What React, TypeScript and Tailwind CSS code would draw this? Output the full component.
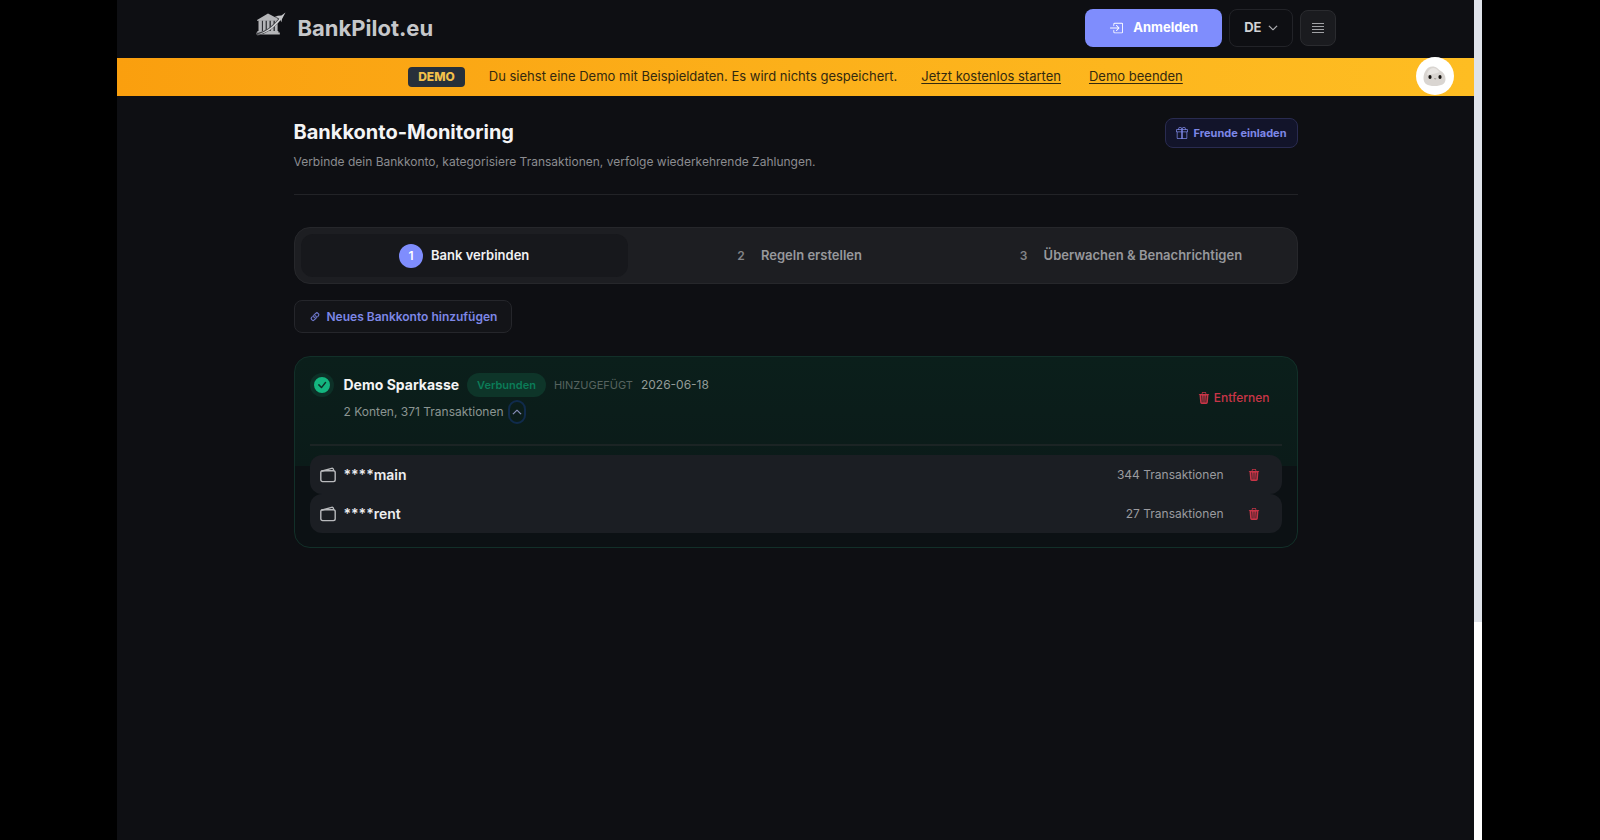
import { useState } from 'react'
import {
  BsBoxArrowInRight,
  BsCheckCircleFill,
  BsChevronDown,
  BsChevronUp,
  BsGift,
  BsLink45Deg,
  BsTrash3Fill,
} from 'react-icons/bs'
import clsx from 'clsx'

interface Account {
  id: string
  name: string
  transactions: number
}

const STEPS = ['Bank verbinden', 'Regeln erstellen', 'Überwachen & Benachrichtigen']

const ACCOUNTS: Account[] = [
  { id: 'main', name: '****main', transactions: 344 },
  { id: 'rent', name: '****rent', transactions: 27 },
]

function Logo() {
  return (
    <svg viewBox="0 0 30 24" className="mb-2 h-6 w-[30px]" aria-hidden="true">
      <g fill="#b4b5b8">
        <path d="M1 8 12 1.500 22 6.700v2H1z" />
        <path d="M2.500 8.200h3.400v11H2.500zM6.800 8.200h2.900v11H6.800zM10.700 8.200h2.900v11h-2.900zM14.700 8.200h2.900v11h-2.900zM18.700 8.200h2.900v11h-2.900z" />
        <path d="M1.400 19h21v1.400h-21zM.5 20.600h23.300v1.800H.5z" />
      </g>
      <path d="M1 22.5C11 20.5 19 14 26 4.5" fill="none" stroke="#45464a" strokeWidth="2.800" />
      <path d="M.8 22.8C11 20 18.500 13.500 25 4.800l1.200.9C19.500 14.500 12 21 .8 22.800z" fill="#d6d7d9" />
      <path d="M29.500.6 26 7l-.6 3.200-1.200-2.800-2.600-1.600-3-.8 3.200-1.200 3.600-.2z" fill="#c4c5c8" />
    </svg>
  )
}

function Mascot() {
  return (
    <svg viewBox="0 0 38 38" className="size-full" aria-hidden="true">
      <circle cx="19" cy="19" r="19" fill="#fff" />
      <path d="M7.500 21c0-5 3-11.500 9-11.500 4 0 5.500 2.500 7.500 4 3.500 2 5.500 4.500 5.500 8.500 0 5-4 7-11 7s-11-2-11-8z" fill="#d9d5d1" />
      <path d="M11 18c.5-4 3-7 6.500-7 3 0 4.500 2.500 6 4-4 2-9 2-12.500 3z" fill="#e8e5e2" />
      <ellipse cx="14" cy="20" rx="1.600" ry="1.900" fill="#15120f" />
      <ellipse cx="24" cy="20" rx="1.600" ry="1.900" fill="#15120f" />
      <path d="M18.200 21.500q1 .8 2 0" fill="none" stroke="#7a726c" strokeWidth=".7" />
    </svg>
  )
}

function MenuIcon() {
  return (
    <svg viewBox="0 0 12 12" className="size-3" stroke="currentColor" strokeWidth="1.200" aria-hidden="true">
      <path d="M0 1.500h12M0 4.500h12M0 7.500h12M0 10.500h12" />
    </svg>
  )
}

function WalletIcon() {
  return (
    <svg
      viewBox="0 0 16 16"
      className="size-4 text-[#b9babd]"
      fill="none"
      stroke="currentColor"
      strokeWidth="1.400"
      strokeLinejoin="round"
      aria-hidden="true"
    >
      <rect x=".8" y="3.800" width="14.400" height="10.800" rx="1.800" />
      <path d="M1.400 4.200 11.600 1.400q1.700-.4 1.900 1.200v1.200" />
    </svg>
  )
}

function Header() {
  return (
    <header className="px-6 pb-0.5">
      <div className="mx-auto flex h-14 max-w-[1080px] items-center justify-between">
        <a href="#" className="flex items-center gap-3">
          <Logo />
          <span className="text-[22px] leading-6 font-bold text-[#c6c7ca]">BankPilot.eu</span>
        </a>
        <div className="flex items-center gap-[7px]">
          <button
            type="button"
            className="flex h-[38px] items-center gap-2.5 rounded-lg bg-[#7f8dfd] px-6 text-[13px] font-bold text-white"
          >
            <BsBoxArrowInRight className="size-3.5" />
            Anmelden
          </button>
          <button
            type="button"
            className="flex h-[38px] items-center gap-1.5 rounded-lg border border-[#222328] px-3.5 text-[13px] font-bold text-[#d2d3d6]"
          >
            DE
            <BsChevronDown className="size-2.5" strokeWidth={0.8} />
          </button>
          <button
            type="button"
            aria-label="Menü"
            className="flex size-9 items-center justify-center rounded-lg border border-[#2a2b2f] bg-[#1a1b1f] text-[#a0a1a5]"
          >
            <MenuIcon />
          </button>
        </div>
      </div>
    </header>
  )
}

function DemoBanner() {
  return (
    <div className="relative flex h-[38px] items-center justify-center bg-linear-to-r from-[#fa9f0e] via-[#fcb01a] to-[#febd22] text-[13px] text-[#33290f]">
      <span className="mr-6 rounded bg-[#27303a] px-2.5 text-xs leading-5 font-extrabold text-[#f3c04a]">DEMO</span>
      <p>Du siehst eine Demo mit Beispieldaten. Es wird nichts gespeichert.</p>
      <a href="#" className="ml-6 underline underline-offset-2">
        Jetzt kostenlos starten
      </a>
      <a href="#" className="ml-7 underline underline-offset-2">
        Demo beenden
      </a>
      <button type="button" aria-label="Assistent" className="absolute -top-px right-5 size-[38px]">
        <Mascot />
      </button>
    </div>
  )
}

function Steps({ active, onSelect }: { active: number; onSelect: (index: number) => void }) {
  return (
    <div className="mt-8 grid grid-cols-3 gap-1 rounded-2xl border border-[#26272b] bg-[#1d1e22] p-1.5">
      {STEPS.map((label, i) => (
        <button
          key={label}
          type="button"
          onClick={() => onSelect(i)}
          className={clsx(
            'flex h-[43px] items-center justify-center gap-2 rounded-xl text-[13px] font-semibold',
            i === active ? 'bg-[#17181c] text-[#f1f1f3]' : 'text-[#97989c]',
          )}
        >
          <span
            className={clsx(
              'flex size-6 items-center justify-center rounded-full text-xs',
              i === active ? 'bg-[#7f8dfd] text-white' : 'text-[#838488]',
            )}
          >
            {i + 1}
          </span>
          {label}
        </button>
      ))}
    </div>
  )
}

function AccountRow({ account }: { account: Account }) {
  return (
    <li className="flex h-[39px] items-center rounded-xl bg-[#1b1e23] pr-[22px] pl-2.5">
      <WalletIcon />
      <span className="ml-2 text-sm font-semibold text-[#eeeef0]">{account.name}</span>
      <span className="ml-auto text-xs text-[#9a9b9f]">{account.transactions} Transaktionen</span>
      <button type="button" aria-label={`${account.name} entfernen`} className="ml-6 text-[#c93547]">
        <BsTrash3Fill className="size-3" />
      </button>
    </li>
  )
}

function BankCard() {
  const [open, setOpen] = useState(true)

  return (
    <section className="mt-[23px] rounded-2xl border border-[#123029] bg-[linear-gradient(to_bottom,#0b1f1b_0,#0b1b19_109px,#0c1114_109px)] px-[15px] py-3.5">
      <div className="flex items-center justify-between pr-3">
        <div className="flex gap-2.5">
          <span className="mt-0.5 flex size-6 items-center justify-center rounded-full bg-[#0d3027]">
            <BsCheckCircleFill className="size-4 text-[#14b57f]" />
          </span>
          <div>
            <div className="flex h-7 items-center gap-2">
              <h2 className="text-sm font-bold text-[#f4f4f5]">Demo Sparkasse</h2>
              <span className="flex h-6 items-center rounded-full bg-[#0e3529] px-2.5 text-[11px] font-semibold text-[#0b7c58]">
                Verbunden
              </span>
              <span className="text-[11px] text-[#56635f] uppercase">Hinzugefügt</span>
              <span className="text-xs text-[#929b98]">2026-06-18</span>
            </div>
            <div className="flex h-[26px] items-center gap-1 text-xs text-[#8b9592]">
              2 Konten, 371 Transaktionen
              <button
                type="button"
                aria-label="Konten anzeigen"
                aria-expanded={open}
                onClick={() => setOpen(!open)}
                className="flex h-6 w-[18px] items-center justify-center rounded-full border-2 border-[#102b4c] text-[#a3a6d8]"
              >
                {open ? (
                  <BsChevronUp className="size-2.5" strokeWidth={0.8} />
                ) : (
                  <BsChevronDown className="size-2.5" strokeWidth={0.8} />
                )}
              </button>
            </div>
          </div>
        </div>
        <button type="button" className="flex items-center gap-1 text-xs font-medium text-[#c93547]">
          <BsTrash3Fill className="size-3" />
          Entfernen
        </button>
      </div>
      {open && (
        <ul className="mt-[19px] border-t-2 border-[#1b2424] pt-[9px]">
          {ACCOUNTS.map((account) => (
            <AccountRow key={account.id} account={account} />
          ))}
        </ul>
      )}
    </section>
  )
}

export default function App() {
  const [step, setStep] = useState(0)

  return (
    <div className="flex min-h-screen bg-black pr-[118px] pl-[117px] font-['Inter',sans-serif]">
      <div className="min-w-0 flex-1 bg-[#0e0f13]">
        <Header />
        <DemoBanner />
        <main className="mx-auto max-w-[1004px] pt-5">
          <div className="flex items-start justify-between border-b border-[#222327] pb-[22px]">
            <div>
              <h1 className="text-xl leading-8 font-bold text-[#f4f4f5]">Bankkonto-Monitoring</h1>
              <p className="mt-1 text-xs leading-5 text-[#8b8c90]">
                Verbinde dein Bankkonto, kategorisiere Transaktionen, verfolge wiederkehrende Zahlungen.
              </p>
            </div>
            <button
              type="button"
              className="mt-0.5 flex h-[30px] items-center gap-1.5 rounded-lg border border-[#292b50] bg-[#12142a] px-2.5 text-[11px] font-bold text-[#7d87e6]"
            >
              <BsGift className="size-3" />
              Freunde einladen
            </button>
          </div>
          <Steps active={step} onSelect={setStep} />
          <button
            type="button"
            className="mt-4 flex h-[33px] items-center gap-1.5 rounded-lg border border-[#25262b] bg-[#131418] px-3.5 text-xs font-semibold text-[#7d87e6]"
          >
            <BsLink45Deg className="size-3" strokeWidth={0.4} />
            Neues Bankkonto hinzufügen
          </button>
          <BankCard />
        </main>
      </div>
      <div className="w-2 bg-white" aria-hidden="true">
        <div className="h-[74%] bg-[#dfe3ea]" />
      </div>
    </div>
  )
}
